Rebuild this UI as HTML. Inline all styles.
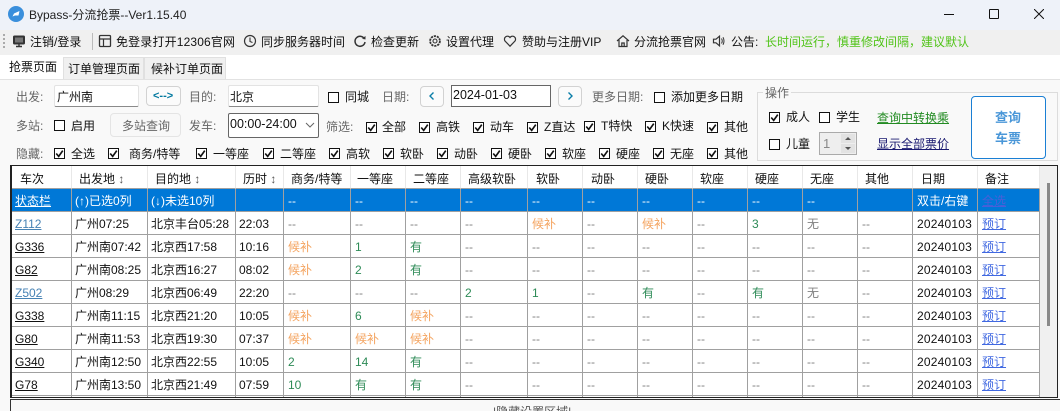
<!DOCTYPE html>
<html lang="zh-CN"><head><meta charset="utf-8"><title>Bypass-分流抢票</title>
<style>
html,body{margin:0;padding:0;width:1060px;height:411px;overflow:hidden}
body{font:12px/16px "Liberation Sans","Noto Sans CJK SC",sans-serif;color:#111}
#root{position:relative;width:1060px;height:411px;overflow:hidden;background:#f9f9f9}
.a{position:absolute}
.t{position:absolute;white-space:nowrap;line-height:16px}
.l{color:#666}
.cb{position:absolute;width:9px;height:9px;border:1px solid #111;background:#fff;box-sizing:content-box}
.cb svg{position:absolute;left:0;top:0;width:9px;height:9px}
.ic{position:absolute;width:14px;height:14px;top:34px}
.input{position:absolute;background:#fff;border:1px solid #e3e3e3;border-bottom:1px solid #8a8a8a;box-sizing:border-box;border-radius:2px}
.btn{position:absolute;border:1px solid #d2d2d2;border-radius:4px;box-sizing:border-box;background:#fbfbfb}
table{border-collapse:separate;border-spacing:0;table-layout:fixed;width:1028px;background:#fff}
td,th{box-sizing:border-box;height:23px;padding:2px 0 0 3px;border-right:1px solid #a0a0a0;border-bottom:1px solid #a0a0a0;font-weight:400;text-align:left;white-space:nowrap;overflow:hidden;line-height:16px;color:#808080}
th{color:#111;padding-left:7px;padding-top:4px;border-right-color:#e8e8e8}
td:nth-child(n+5){padding-left:4px}
td:nth-child(-n+4),td.d{color:#111}
td.d{letter-spacing:.2px}
.s td{background:#0078d7;color:#fff!important}
.s a{color:#fff}
.o{color:#f4a460}.g{color:#2e8b57}
td a{color:#111;text-decoration:underline}
a.z{color:#4682b4}
td a.p{color:#4169e1}
.s a.all{color:#4a5fd8}
i{font-style:normal;color:#555;font-size:12px}
</style></head><body><div id="root">
<svg width="0" height="0" style="position:absolute"><defs><symbol id="c" viewBox="0 0 11 11"><path d="M1.5 5.5L4.5 9L9.5 2" fill="none" stroke="#111" stroke-width="2"/></symbol></defs></svg>

<!-- title bar -->
<div class="a" style="left:0;top:0;width:1060px;height:30px;background:#eef2f9"></div>
<svg class="a" style="left:8px;top:6px" width="16" height="16" viewBox="0 0 16 16"><circle cx="8" cy="8" r="8" fill="#3a8fdc"/><path d="M4.5 10.5L6 7.5L11.5 5L10.5 9.5L7 9.5Z" fill="#fff"/></svg>
<span class="t" style="left:29px;top:7px;color:#222">Bypass-分流抢票--Ver1.15.40</span>
<div class="a" style="left:944px;top:14px;width:10px;height:1px;background:#111"></div>
<div class="a" style="left:989px;top:9px;width:8px;height:8px;border:1px solid #111;border-radius:1px"></div>
<svg class="a" style="left:1034px;top:9px" width="10" height="10" viewBox="0 0 10 10"><path d="M0 0L10 10M10 0L0 10" stroke="#111" stroke-width="1" fill="none"/></svg>

<!-- toolbar -->
<div class="a" style="left:0;top:30px;width:1060px;height:25px;background:#f0f0f0"></div>
<div class="a" style="left:3px;top:34px;width:2px;height:16px;background:repeating-linear-gradient(#aaa 0 2px,transparent 2px 4px)"></div>
<div class="a" style="left:92px;top:33px;width:1px;height:17px;background:#bbb"></div>
<svg class="ic" style="left:12px" viewBox="0 0 14 14"><rect x="1.5" y="2" width="11" height="8" rx="1" fill="#333" stroke="#333"/><rect x="3" y="3.5" width="8" height="5" fill="#777"/><path d="M4 12.5H10M7 10V12.5" stroke="#333" stroke-width="1.4"/></svg>
<span class="t" style="left:30px;top:34px">注销/登录</span>
<svg class="ic" style="left:98px" viewBox="0 0 14 14"><rect x="1.5" y="1.5" width="11" height="11" rx="1" fill="none" stroke="#333" stroke-width="1.3"/><path d="M1.5 5H12.5M5.5 5V12.5" stroke="#333" stroke-width="1.2" fill="none"/></svg>
<span class="t" style="left:116px;top:34px;letter-spacing:.15px">免登录打开12306官网</span>
<svg class="ic" style="left:243px" viewBox="0 0 14 14"><circle cx="7" cy="7" r="5.5" fill="none" stroke="#333" stroke-width="1.2"/><path d="M7 3.5V7.5L9.5 8.5" fill="none" stroke="#333" stroke-width="1.1"/></svg>
<span class="t" style="left:261px;top:34px">同步服务器时间</span>
<svg class="ic" style="left:353px" viewBox="0 0 14 14"><path d="M11.5 5A5 5 0 1 0 12 8" fill="none" stroke="#333" stroke-width="1.5"/><path d="M9 4.5L12.5 5.5L12.5 2Z" fill="#333"/></svg>
<span class="t" style="left:371px;top:34px">检查更新</span>
<svg class="ic" style="left:428px" viewBox="0 0 14 14"><circle cx="7" cy="7" r="4.9" fill="none" stroke="#333" stroke-width="1.8" stroke-dasharray="2.2 .9"/><circle cx="7" cy="7" r="2" fill="none" stroke="#333" stroke-width="1.1"/></svg>
<span class="t" style="left:446px;top:34px">设置代理</span>
<svg class="ic" style="left:503px" viewBox="0 0 14 14"><path d="M7 12.2L2 7A3 3 0 0 1 7 3.5A3 3 0 0 1 12 7Z" fill="none" stroke="#333" stroke-width="1.2"/></svg>
<span class="t" style="left:522px;top:34px">赞助与注册VIP</span>
<svg class="ic" style="left:616px" viewBox="0 0 14 14"><path d="M1 7L7 1.8L13 7M3 6V12.5H11V6M5.8 12.5V9H8.2V12.5" fill="none" stroke="#333" stroke-width="1.2"/></svg>
<span class="t" style="left:634px;top:34px">分流抢票官网</span>
<svg class="ic" style="left:712px" viewBox="0 0 14 14"><path d="M1.5 5.2H4L7.5 2.2V11.8L4 8.8H1.5Z" fill="none" stroke="#333" stroke-width="1.2"/><path d="M9.5 4.5Q11 7 9.5 9.5M11 3.2Q13 7 11 10.8" fill="none" stroke="#333" stroke-width="1"/></svg>
<span class="t" style="left:731px;top:34px">公告:</span>
<span class="t" style="left:765px;top:34px;color:#52c41a">长时间运行，慎重修改间隔，建议默认</span>

<!-- tabs -->
<div class="a" style="left:0;top:55px;width:1060px;height:24px;background:#fff"></div>
<div class="a" style="left:0;top:79px;width:1060px;height:1px;background:#e2e2e2"></div>
<div class="a" style="left:63px;top:57px;width:81px;height:22px;background:#f0f0f0;border:1px solid #e0e0e0;border-bottom:0;box-sizing:border-box"></div>
<div class="a" style="left:144px;top:57px;width:82px;height:22px;background:#f0f0f0;border:1px solid #e0e0e0;border-bottom:0;box-sizing:border-box"></div>
<span class="t" style="left:9px;top:59px">抢票页面</span>
<span class="t" style="left:68px;top:61px">订单管理页面</span>
<span class="t" style="left:151px;top:61px">候补订单页面</span>

<!-- row 1 -->
<span class="t l" style="left:16px;top:89px">出发:</span>
<div class="input" style="left:54px;top:85px;width:85px;height:22px"></div>
<span class="t" style="left:57px;top:89px">广州南</span>
<div class="btn" style="left:146px;top:86px;width:35px;height:20px"></div>
<span class="t" style="left:153px;top:88px;color:#00789f;font-size:11px;font-weight:700">&lt;--&gt;</span>
<span class="t l" style="left:189px;top:89px">目的:</span>
<div class="input" style="left:228px;top:85px;width:91px;height:22px"></div>
<span class="t" style="left:230px;top:89px">北京</span>
<div class="cb" style="left:328px;top:92px"></div>
<span class="t" style="left:345px;top:89px">同城</span>
<span class="t l" style="left:382px;top:89px">日期:</span>
<div class="btn" style="left:420px;top:86px;width:24px;height:21px"></div>
<svg class="a" style="left:428px;top:91px" width="8" height="10" viewBox="0 0 8 10"><path d="M5.5 1.5L2 5L5.5 8.5" fill="none" stroke="#0a7ea8" stroke-width="1.4"/></svg>
<div class="a" style="left:451px;top:85px;width:100px;height:22px;background:#fff;border:1px solid #666;box-sizing:border-box"></div>
<span class="t" style="left:453px;top:87px;font-size:12.5px">2024-01-03</span>
<div class="btn" style="left:558px;top:86px;width:24px;height:21px"></div>
<svg class="a" style="left:566px;top:91px" width="8" height="10" viewBox="0 0 8 10"><path d="M2.5 1.5L6 5L2.5 8.5" fill="none" stroke="#0a7ea8" stroke-width="1.4"/></svg>
<span class="t l" style="left:592px;top:89px">更多日期:</span>
<div class="cb" style="left:654px;top:92px"></div>
<span class="t" style="left:671px;top:89px">添加更多日期</span>

<!-- row 2 -->
<span class="t l" style="left:16px;top:118px">多站:</span>
<div class="cb" style="left:54px;top:120px"></div>
<span class="t" style="left:71px;top:118px">启用</span>
<div class="btn" style="left:110px;top:113px;width:71px;height:24px;background:#f8f8f8;border-color:#e4e4e4"></div>
<span class="t" style="left:122px;top:118px;color:#666">多站查询</span>
<span class="t l" style="left:189px;top:118px">发车:</span>
<div class="a" style="left:228px;top:113px;width:91px;height:25px;background:#fff;border:1px solid #666;border-radius:2px;box-sizing:border-box"></div>
<span class="t" style="left:230px;top:116px;font-size:12.5px">00:00-24:00</span>
<svg class="a" style="left:305px;top:122px" width="10" height="7" viewBox="0 0 10 7"><path d="M1 1L5 5L9 1" fill="none" stroke="#666" stroke-width="1"/></svg>
<span class="t l" style="left:326px;top:119px">筛选:</span>
<div class="cb" style="left:366px;top:122px"><svg><use href="#c"/></svg></div><span class="t" style="left:382px;top:119px">全部</span>
<div class="cb" style="left:419px;top:122px"><svg><use href="#c"/></svg></div><span class="t" style="left:436px;top:119px">高铁</span>
<div class="cb" style="left:473px;top:122px"><svg><use href="#c"/></svg></div><span class="t" style="left:490px;top:119px">动车</span>
<div class="cb" style="left:527px;top:122px"><svg><use href="#c"/></svg></div><span class="t" style="left:544px;top:119px">Z直达</span>
<div class="cb" style="left:584px;top:121px"><svg><use href="#c"/></svg></div><span class="t" style="left:601px;top:118px">T特快</span>
<div class="cb" style="left:645px;top:121px"><svg><use href="#c"/></svg></div><span class="t" style="left:662px;top:118px">K快速</span>
<div class="cb" style="left:707px;top:122px"><svg><use href="#c"/></svg></div><span class="t" style="left:724px;top:119px">其他</span>

<!-- row 3 -->
<span class="t l" style="left:16px;top:146px">隐藏:</span>
<div class="cb" style="left:54px;top:148px"><svg><use href="#c"/></svg></div><span class="t" style="left:71px;top:146px">全选</span>
<div class="cb" style="left:108px;top:148px"><svg><use href="#c"/></svg></div><span class="t" style="left:129px;top:146px">商务/特等</span>
<div class="cb" style="left:196px;top:148px"><svg><use href="#c"/></svg></div><span class="t" style="left:213px;top:146px">一等座</span>
<div class="cb" style="left:263px;top:148px"><svg><use href="#c"/></svg></div><span class="t" style="left:280px;top:146px">二等座</span>
<div class="cb" style="left:329px;top:148px"><svg><use href="#c"/></svg></div><span class="t" style="left:346px;top:146px">高软</span>
<div class="cb" style="left:383px;top:148px"><svg><use href="#c"/></svg></div><span class="t" style="left:400px;top:146px">软卧</span>
<div class="cb" style="left:437px;top:148px"><svg><use href="#c"/></svg></div><span class="t" style="left:454px;top:146px">动卧</span>
<div class="cb" style="left:491px;top:148px"><svg><use href="#c"/></svg></div><span class="t" style="left:508px;top:146px">硬卧</span>
<div class="cb" style="left:545px;top:148px"><svg><use href="#c"/></svg></div><span class="t" style="left:562px;top:146px">软座</span>
<div class="cb" style="left:599px;top:148px"><svg><use href="#c"/></svg></div><span class="t" style="left:616px;top:146px">硬座</span>
<div class="cb" style="left:653px;top:148px"><svg><use href="#c"/></svg></div><span class="t" style="left:670px;top:146px">无座</span>
<div class="cb" style="left:707px;top:148px"><svg><use href="#c"/></svg></div><span class="t" style="left:724px;top:146px">其他</span>

<!-- group -->
<div class="a" style="left:757px;top:92px;width:301px;height:69px;border:1px solid #dcdcdc;box-sizing:border-box"></div>
<span class="t l" style="left:763px;top:85px;background:#f9f9f9;padding:0 2px">操作</span>
<div class="cb" style="left:769px;top:112px"><svg><use href="#c"/></svg></div><span class="t" style="left:786px;top:109px">成人</span>
<div class="cb" style="left:819px;top:112px"></div><span class="t" style="left:836px;top:109px">学生</span>
<span class="t" style="left:877px;top:110px;color:#228b22;text-decoration:underline">查询中转换乘</span>
<div class="cb" style="left:769px;top:139px"></div><span class="t" style="left:786px;top:136px">儿童</span>
<div class="a" style="left:819px;top:132px;width:38px;height:23px;background:#eee;border:1px solid #aaa;box-sizing:border-box"></div>
<span class="t" style="left:823px;top:136px;color:#888;font-size:13px">1</span>
<div class="a" style="left:841px;top:134px;width:14px;height:9px;background:#e2e2e2"></div>
<div class="a" style="left:841px;top:144px;width:14px;height:9px;background:#e2e2e2"></div>
<svg class="a" style="left:844px;top:136px" width="8" height="15" viewBox="0 0 8 15"><path d="M1 4L4 1L7 4ZM1 11L7 11L4 14Z" fill="#555"/></svg>
<span class="t" style="left:877px;top:136px;color:#191970;text-decoration:underline">显示全部票价</span>
<div class="a" style="left:971px;top:96px;width:75px;height:63px;background:#fff;border:1px solid #1a7fd4;border-radius:4px;box-sizing:border-box"></div>
<span class="t" style="left:995px;top:110px;color:#4a97d8;font-size:13px;font-weight:700">查询</span>
<span class="t" style="left:995px;top:131px;color:#4a97d8;font-size:13px;font-weight:700">车票</span>

<!-- grid frame -->
<div class="a" style="left:10px;top:165px;width:1048px;height:233px;border:1px solid #222;border-left-width:2px;box-sizing:border-box;background:#f0f0f0"></div>
<div class="a" style="left:1047px;top:183px;width:3px;height:143px;background:#8a8a8a"></div>
<div class="a" style="left:12px;top:166px;width:1028px;height:231px;overflow:hidden;background:#fff">
<table>
<colgroup><col style="width:60px"><col style="width:76px"><col style="width:88px"><col style="width:48px"><col style="width:67px"><col style="width:55px"><col style="width:55px"><col style="width:67px"><col style="width:55px"><col style="width:55px"><col style="width:55px"><col style="width:55px"><col style="width:55px"><col style="width:55px"><col style="width:55px"><col style="width:65px"><col style="width:62px"></colgroup>
<tr><th style="padding-left:8px">车次</th><th>出发地 <i>↕</i></th><th>目的地 <i>↕</i></th><th>历时 <i>↕</i></th><th>商务/特等</th><th style="padding-left:6px">一等座</th><th>二等座</th><th>高级软卧</th><th style="padding-left:8px">软卧</th><th style="padding-left:8px">动卧</th><th>硬卧</th><th>软座</th><th>硬座</th><th>无座</th><th>其他</th><th style="padding-left:8px">日期</th><th>备注</th></tr>
<tr class="s"><td><a>状态栏</a></td><td>(↑)已选0列</td><td>(↓)未选10列</td><td></td><td>--</td><td>--</td><td>--</td><td>--</td><td>--</td><td>--</td><td>--</td><td>--</td><td>--</td><td>--</td><td></td><td>双击/右键</td><td><a class="all">全选</a></td></tr>
<tr><td><a class="z">Z112</a></td><td>广州07:25</td><td>北京丰台05:28</td><td>22:03</td><td>--</td><td>--</td><td>--</td><td>--</td><td class="o">候补</td><td>--</td><td class="o">候补</td><td>--</td><td class="g">3</td><td>无</td><td>--</td><td class="d">20240103</td><td><a class="p">预订</a></td></tr>
<tr><td><a>G336</a></td><td>广州南07:42</td><td>北京西17:58</td><td>10:16</td><td class="o">候补</td><td class="g">1</td><td class="g">有</td><td>--</td><td>--</td><td>--</td><td>--</td><td>--</td><td>--</td><td>--</td><td>--</td><td class="d">20240103</td><td><a class="p">预订</a></td></tr>
<tr><td><a>G82</a></td><td>广州南08:25</td><td>北京西16:27</td><td>08:02</td><td class="o">候补</td><td class="g">2</td><td class="g">有</td><td>--</td><td>--</td><td>--</td><td>--</td><td>--</td><td>--</td><td>--</td><td>--</td><td class="d">20240103</td><td><a class="p">预订</a></td></tr>
<tr><td><a class="z">Z502</a></td><td>广州08:29</td><td>北京西06:49</td><td>22:20</td><td>--</td><td>--</td><td>--</td><td class="g">2</td><td class="g">1</td><td>--</td><td class="g">有</td><td>--</td><td class="g">有</td><td>无</td><td>--</td><td class="d">20240103</td><td><a class="p">预订</a></td></tr>
<tr><td><a>G338</a></td><td>广州南11:15</td><td>北京西21:20</td><td>10:05</td><td class="o">候补</td><td class="g">6</td><td class="o">候补</td><td>--</td><td>--</td><td>--</td><td>--</td><td>--</td><td>--</td><td>--</td><td>--</td><td class="d">20240103</td><td><a class="p">预订</a></td></tr>
<tr><td><a>G80</a></td><td>广州南11:53</td><td>北京西19:30</td><td>07:37</td><td class="o">候补</td><td class="o">候补</td><td class="o">候补</td><td>--</td><td>--</td><td>--</td><td>--</td><td>--</td><td>--</td><td>--</td><td>--</td><td class="d">20240103</td><td><a class="p">预订</a></td></tr>
<tr><td><a>G340</a></td><td>广州南12:50</td><td>北京西22:55</td><td>10:05</td><td class="g">2</td><td class="g">14</td><td class="g">有</td><td>--</td><td>--</td><td>--</td><td>--</td><td>--</td><td>--</td><td>--</td><td>--</td><td class="d">20240103</td><td><a class="p">预订</a></td></tr>
<tr><td><a>G78</a></td><td>广州南13:50</td><td>北京西21:49</td><td>07:59</td><td class="g">10</td><td class="g">有</td><td class="g">有</td><td>--</td><td>--</td><td>--</td><td>--</td><td>--</td><td>--</td><td>--</td><td>--</td><td class="d">20240103</td><td><a class="p">预订</a></td></tr>
<tr><td></td><td></td><td></td><td></td><td></td><td></td><td></td><td></td><td></td><td></td><td></td><td></td><td></td><td></td><td></td><td></td><td></td></tr>
</table>
</div>

<!-- bottom panel -->
<div class="a" style="left:10px;top:399px;width:1050px;height:12px;border-top:1px solid #333;border-left:1px solid #333;background:#f9f9f9;box-sizing:border-box;overflow:hidden"></div>
<span class="t" style="left:493px;top:404px;color:#555">|隐藏设置区域|</span>
</div></body></html>
